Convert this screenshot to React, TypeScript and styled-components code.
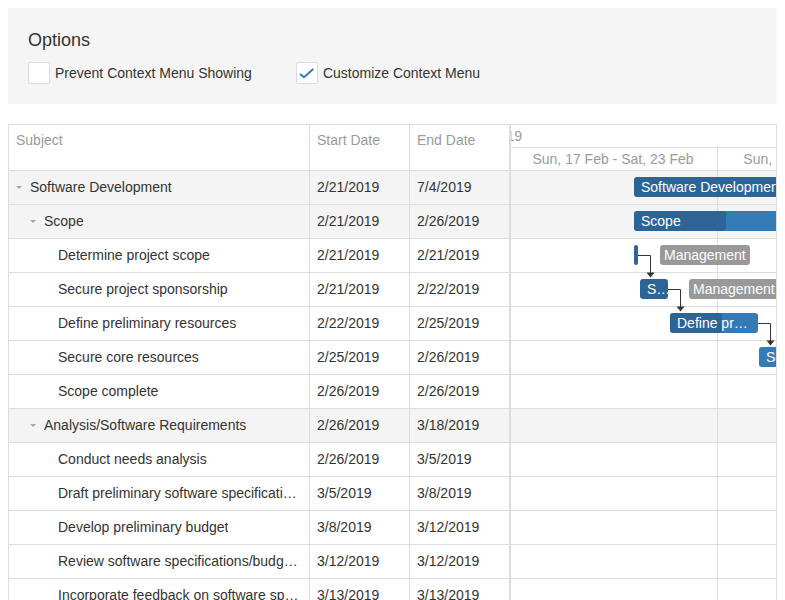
import React from 'react';
import styled, { createGlobalStyle } from 'styled-components';

const GlobalStyle = createGlobalStyle`
  html, body {
    overflow: hidden;
  }
  body {
    margin: 8px;
    background: #fff;
    color: #333;
    font-family: "Liberation Sans", Arial, Helvetica, sans-serif;
    font-size: 14px;
  }
`;

const DARK = '#2d6496';
const LIGHT = '#337ab7';

const OptionsPanel = styled.div`
  box-sizing: border-box;
  height: 96px;
  padding: 20px;
  background: #f5f5f5;
`;

const OptionsTitle = styled.div`
  font-size: 18px;
  line-height: 24px;
  margin-bottom: 10px;
`;

const OptionsRow = styled.div`
  display: flex;
  align-items: center;
  gap: 44px;
`;

const CheckItem = styled.label`
  display: flex;
  align-items: center;
  gap: 5px;
  line-height: 22px;
`;

const Box = styled.span`
  box-sizing: border-box;
  width: 22px;
  height: 22px;
  border: 1px solid #ddd;
  border-radius: 2px;
  background: #fff;
  display: flex;
`;

const Gantt = styled.div`
  margin-top: 20px;
  display: flex;
  height: 520px;
  border: 1px solid #ddd;
  overflow: hidden;
`;

const GridPane = styled.div`
  flex: none;
  width: 501px;
`;

const GridRow = styled.div<{ $summary?: boolean; $header?: boolean }>`
  box-sizing: border-box;
  display: grid;
  grid-template-columns: 301px 100px 100px;
  height: ${p => (p.$header ? 46 : 34)}px;
  border-bottom: 1px solid #ddd;
  background: ${p => (p.$summary ? '#f4f4f4' : '#fff')};
  color: ${p => (p.$header ? '#9a9a9a' : '#333')};
`;

const Cell = styled.div<{ $header?: boolean; $level?: number }>`
  box-sizing: border-box;
  display: flex;
  align-items: ${p => (p.$header ? 'flex-start' : 'center')};
  padding: ${p => (p.$header ? '5px 7px 0' : '0 7px 2px')};
  padding-left: ${p => 7 + (p.$level || 0) * 14}px;
  border-right: 1px solid #ddd;
  line-height: 20px;
  white-space: nowrap;
  overflow: hidden;
  min-width: 0;
`;

const Caret = styled.span<{ $open?: boolean }>`
  flex: none;
  width: 14px;
  height: 20px;
  display: flex;
  align-items: center;
  &::before {
    content: '';
    display: ${p => (p.$open ? 'block' : 'none')};
    border-left: 3px solid transparent;
    border-right: 3px solid transparent;
    border-top: 3px solid #a6a6a6;
    margin-top: 2px;
  }
`;

const Label = styled.span`
  overflow: hidden;
  text-overflow: ellipsis;
  min-width: 0;
`;

const Timeline = styled.div`
  flex: 1;
  min-width: 0;
  border-left: 1px solid #ddd;
  overflow: hidden;
`;

const ScaleRow = styled.div`
  box-sizing: border-box;
  display: flex;
  height: 23px;
  border-bottom: 1px solid #ddd;
  color: #9a9a9a;
  line-height: 22px;
  white-space: nowrap;
`;

const MonthCell = styled.div`
  flex: none;
  margin-left: -48px;
  width: 600px;
`;

const WeekCell = styled.div`
  box-sizing: border-box;
  flex: none;
  width: 207px;
  padding-right: 2px;
  border-right: 1px solid #ddd;
  text-align: center;
`;

const TimelineBody = styled.div`
  position: relative;
`;

const TimelineRow = styled.div<{ $summary?: boolean }>`
  box-sizing: border-box;
  position: relative;
  display: flex;
  height: 34px;
  border-bottom: 1px solid #ddd;
  background: ${p => (p.$summary ? '#f4f4f4' : '#fff')};
`;

const Bar = styled.div<{ $dark?: boolean; $thin?: boolean }>`
  position: absolute;
  top: 6px;
  height: 20px;
  box-sizing: border-box;
  padding: ${p => (p.$thin ? 0 : '0 7px')};
  border-radius: ${p => (p.$thin ? 2 : 3)}px;
  background: ${p => (p.$dark ? DARK : LIGHT)};
  color: #fff;
  line-height: 20px;
  white-space: nowrap;
  overflow: hidden;
`;

const Progress = styled.div`
  position: absolute;
  left: 0;
  top: 0;
  bottom: 0;
  border-radius: 3px;
  background: ${DARK};
`;

const BarText = styled.span`
  position: relative;
`;

const Resource = styled.div`
  position: absolute;
  top: 6px;
  height: 20px;
  padding: 0 4px;
  border-radius: 3px;
  background: #999;
  color: #fff;
  line-height: 20px;
  white-space: nowrap;
`;

const Links = styled.svg`
  position: absolute;
  left: 0;
  top: 0;
  width: 100%;
  height: 100%;
  pointer-events: none;
`;

type Task = {
  subject: string;
  start: string;
  end: string;
  level: number;
  summary?: boolean;
};

const tasks: Task[] = [
  { subject: 'Software Development', start: '2/21/2019', end: '7/4/2019', level: 0, summary: true },
  { subject: 'Scope', start: '2/21/2019', end: '2/26/2019', level: 1, summary: true },
  { subject: 'Determine project scope', start: '2/21/2019', end: '2/21/2019', level: 2 },
  { subject: 'Secure project sponsorship', start: '2/21/2019', end: '2/22/2019', level: 2 },
  { subject: 'Define preliminary resources', start: '2/22/2019', end: '2/25/2019', level: 2 },
  { subject: 'Secure core resources', start: '2/25/2019', end: '2/26/2019', level: 2 },
  { subject: 'Scope complete', start: '2/26/2019', end: '2/26/2019', level: 2 },
  { subject: 'Analysis/Software Requirements', start: '2/26/2019', end: '3/18/2019', level: 1, summary: true },
  { subject: 'Conduct needs analysis', start: '2/26/2019', end: '3/5/2019', level: 2 },
  { subject: 'Draft preliminary software specifications', start: '3/5/2019', end: '3/8/2019', level: 2 },
  { subject: 'Develop preliminary budget', start: '3/8/2019', end: '3/12/2019', level: 2 },
  { subject: 'Review software specifications/budget with team', start: '3/12/2019', end: '3/12/2019', level: 2 },
  { subject: 'Incorporate feedback on software specifications', start: '3/13/2019', end: '3/13/2019', level: 2 },
  { subject: 'Develop delivery timeline', start: '3/14/2019', end: '3/14/2019', level: 2 },
  { subject: 'Obtain approvals to proceed', start: '3/14/2019', end: '3/14/2019', level: 2 },
];

// bars per row index, in px from the visible timeline left edge
type BarSpec = {
  left: number;
  width: number;
  text?: string;
  progress?: number;
  dark?: boolean;
  resource?: { left: number; text: string };
};

const bars: Record<number, BarSpec> = {
  0: { left: 123, width: 400, text: 'Software Development', dark: true },
  1: { left: 123, width: 400, text: 'Scope', progress: 92 },
  2: { left: 123, width: 4, dark: true, resource: { left: 149, text: 'Management' } },
  3: { left: 129, width: 28, text: 'S…', dark: true, resource: { left: 178, text: 'Management' } },
  4: { left: 159, width: 88, text: 'Define pr…', progress: 52 },
  5: { left: 248, width: 60, text: 'Secure core resources' },
};

function Check({ checked }: { checked?: boolean }) {
  return (
    <Box>
      {checked && (
        <svg width="20" height="20" viewBox="0 0 20 20">
          <path d="M3 11 L7 14.3 L16.3 6" fill="none" stroke={LIGHT} strokeWidth="2" />
        </svg>
      )}
    </Box>
  );
}

export default function App() {
  return (
    <>
      <GlobalStyle />
      <OptionsPanel>
        <OptionsTitle>Options</OptionsTitle>
        <OptionsRow>
          <CheckItem>
            <Check />
            Prevent Context Menu Showing
          </CheckItem>
          <CheckItem>
            <Check checked />
            Customize Context Menu
          </CheckItem>
        </OptionsRow>
      </OptionsPanel>

      <Gantt>
        <GridPane>
          <GridRow $header>
            <Cell $header>Subject</Cell>
            <Cell $header>Start Date</Cell>
            <Cell $header>End Date</Cell>
          </GridRow>
          {tasks.map(t => (
            <GridRow key={t.subject} $summary={t.summary}>
              <Cell $level={t.level}>
                <Caret $open={t.summary} />
                <Label>{t.subject}</Label>
              </Cell>
              <Cell>{t.start}</Cell>
              <Cell>{t.end}</Cell>
            </GridRow>
          ))}
        </GridPane>

        <Timeline>
          <ScaleRow>
            <MonthCell>Feb 2019</MonthCell>
          </ScaleRow>
          <ScaleRow>
            <WeekCell>Sun, 17 Feb - Sat, 23 Feb</WeekCell>
            <WeekCell>Sun, 24 Feb - Sat, 2 Mar</WeekCell>
          </ScaleRow>
          <TimelineBody>
            {tasks.map((t, i) => {
              const b = bars[i];
              return (
                <TimelineRow key={t.subject} $summary={t.summary}>
                  <WeekCell />
                  <WeekCell />
                  {b && (
                    <Bar $dark={b.dark} $thin={b.width < 10} style={{ left: b.left, width: b.width }}>
                      {b.progress !== undefined && <Progress style={{ width: b.progress }} />}
                      {b.text && <BarText>{b.text}</BarText>}
                    </Bar>
                  )}
                  {b && b.resource && <Resource style={{ left: b.resource.left }}>{b.resource.text}</Resource>}
                </TimelineRow>
              );
            })}
            <Links>
              <g fill="none" stroke="#333" strokeWidth="1">
                <path d="M127 84.5 H139.5 V102" />
                <path d="M157 118.5 H169.5 V136" />
                <path d="M247 152.5 H259.5 V170" />
              </g>
              <g fill="#333">
                <polygon points="135.5,101.5 143.5,101.5 139.5,106.5" />
                <polygon points="165.5,135.5 173.5,135.5 169.5,140.5" />
                <polygon points="255.5,169.5 263.5,169.5 259.5,174.5" />
              </g>
            </Links>
          </TimelineBody>
        </Timeline>
      </Gantt>
    </>
  );
}
